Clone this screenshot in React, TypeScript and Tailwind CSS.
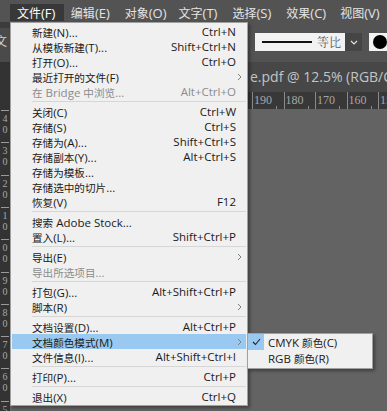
import React from "react";

type Item =
  | "sep"
  | { l: string; s?: string; d?: boolean; a?: boolean; h?: boolean };

const items: Item[] = [
  { l: "新建(N)...", s: "Ctrl+N" },
  { l: "从模板新建(T)...", s: "Shift+Ctrl+N" },
  { l: "打开(O)...", s: "Ctrl+O" },
  { l: "最近打开的文件(F)", a: true },
  { l: "在 Bridge 中浏览...", s: "Alt+Ctrl+O", d: true },
  "sep",
  { l: "关闭(C)", s: "Ctrl+W" },
  { l: "存储(S)", s: "Ctrl+S" },
  { l: "存储为(A)...", s: "Shift+Ctrl+S" },
  { l: "存储副本(Y)...", s: "Alt+Ctrl+S" },
  { l: "存储为模板..." },
  { l: "存储选中的切片..." },
  { l: "恢复(V)", s: "F12" },
  "sep",
  { l: "搜索 Adobe Stock..." },
  { l: "置入(L)...", s: "Shift+Ctrl+P" },
  "sep",
  { l: "导出(E)", a: true },
  { l: "导出所选项目...", d: true },
  "sep",
  { l: "打包(G)...", s: "Alt+Shift+Ctrl+P" },
  { l: "脚本(R)", a: true },
  "sep",
  { l: "文档设置(D)...", s: "Alt+Ctrl+P" },
  { l: "文档颜色模式(M)", a: true, h: true },
  { l: "文件信息(I)...", s: "Alt+Shift+Ctrl+I" },
  "sep",
  { l: "打印(P)...", s: "Ctrl+P" },
  "sep",
  { l: "退出(X)", s: "Ctrl+Q" },
];

const menus = ["文件(F)", "编辑(E)", "对象(O)", "文字(T)", "选择(S)", "效果(C)", "视图(V)"];

const rulerNums = ["190", "180", "170", "160", "150"];
const vDigits = ["4", "3", "2", "1", "0", "9", "8", "7", "6", "5"];

const CJK_RE = /([\u3000-\u9fff]+)/;

function Mixed({ s, cjk, lat }: { s: string; cjk: string; lat: string }) {
  const parts = s.split(CJK_RE);
  return (
    <>
      {parts.map((p, i) =>
        p === "" ? null : CJK_RE.test(p) ? (
          <span key={i} className={cjk} style={{ fontFamily: '"Noto Sans CJK SC", sans-serif' }}>
            {p}
          </span>
        ) : (
          <span key={i} className={lat} style={{ fontFamily: '"Open Sans", "Noto Sans", sans-serif' }}>
            {p}
          </span>
        )
      )}
    </>
  );
}

function Chevron() {
  return (
    <svg width="5" height="8" viewBox="0 0 5 8" className="absolute right-[4px] top-[4px]">
      <path d="M1 1 L4 4 L1 7" fill="none" stroke="#808080" strokeWidth="1" />
    </svg>
  );
}

export default function App() {
  return (
    <div
      className="relative w-[387px] h-[411px] overflow-hidden bg-[#636363] flex flex-col"
      style={{ fontFamily: '"Open Sans", "Noto Sans CJK SC", sans-serif' }}
    >
      {/* menu bar */}
      <div className="h-[22px] bg-[#535353] flex items-stretch pl-[10px] shrink-0">
        {menus.map((m, i) => (
          <div
            key={m}
            className={
              "w-[54.5px] pl-[7px] mt-[4px] mb-[1px] flex items-center whitespace-nowrap " +
              (i === 0 ? "bg-[#383838] text-white" : "text-[#e4e4e4]")
            }
          >
            <span className="leading-[16px]">
              <Mixed s={m} cjk="text-[12px] leading-[16px]" lat="text-[13px] leading-[16px]" />
            </span>
          </div>
        ))}
      </div>

      <div className="flex flex-1 min-h-0">
        {/* left strip */}
        <div className="w-[10px] shrink-0 flex flex-col">
          <div className="h-[6px] bg-[#3c3c3c]" />
          <div className="h-[34px] bg-[#4a4a4a] overflow-hidden relative">
            <span
              className="absolute left-[-5px] top-[6px] text-[12px] leading-[14px] text-[#cfcfcf]"
              style={{ fontFamily: '"Noto Sans CJK SC", sans-serif' }}
            >
              文
            </span>
          </div>
          <div className="flex-1 bg-[#333333] relative overflow-hidden">
            {vDigits.map((d, i) => (
              <div
                key={i}
                className="absolute left-0 w-[10px] flex flex-col items-center"
                style={{ top: 48 + i * 32.3 }}
              >
                <div className="w-[8px] h-px bg-[#9a9a9a]" />
                <span
                  className="text-[10px] leading-[11px] text-[#a8a8a8] mt-[2px]"
                  style={{ fontFamily: '"Liberation Serif", serif' }}
                >
                  {d}
                </span>
                {i < 9 && (
                  <span
                    className="text-[10px] leading-[11px] text-[#a8a8a8]"
                    style={{ fontFamily: '"Liberation Serif", serif' }}
                  >
                    0
                  </span>
                )}
              </div>
            ))}
          </div>
        </div>

        {/* main */}
        <div className="flex-1 flex flex-col min-w-0">
          {/* control bar */}
          <div className="h-[40px] bg-[#535353] flex items-center justify-end shrink-0">
            <div className="w-[90px] h-[18px] bg-[#f2f2f2] flex items-center pl-[7px]">
              <div className="w-[50px] h-[2px] bg-[#111]" />
              <span
                className="ml-[5px] text-[12px] leading-[14px] text-[#555]"
                style={{ fontFamily: '"Noto Serif CJK SC", "Liberation Serif", serif' }}
              >
                等比
              </span>
            </div>
            <div className="w-[17px] h-[18px] bg-[#454545] flex items-center justify-center">
              <svg width="8" height="5" viewBox="0 0 8 5">
                <path d="M1 1 L4 4 L7 1" fill="none" stroke="#e0e0e0" strokeWidth="1.2" />
              </svg>
            </div>
            <div className="ml-[7px] w-[18px] h-[18px] bg-[#f2f2f2] flex items-center pl-[4px] overflow-hidden">
              <div className="w-[14px] h-[14px] rounded-full bg-black shrink-0" />
            </div>
          </div>
          {/* tab row */}
          <div className="h-[30px] bg-[#474747] flex items-center pl-[240px] shrink-0 overflow-hidden">
            <span className="text-[14px] leading-[18px] text-[#c4c4c4] whitespace-nowrap">
              e.pdf @ 12.5% (RGB/CMYK)
            </span>
          </div>
          {/* horizontal ruler */}
          <div className="h-[17px] bg-[#383838] shrink-0 flex pl-[242px] overflow-hidden">
            {rulerNums.map((n) => (
              <div key={n} className="w-[31.5px] shrink-0 flex h-full relative">
                <div className="w-px h-full bg-[#8a8a8a]" />
                <span
                  className="ml-[1px] text-[12px] leading-[17px] text-[#a6a6a6]"
                  style={{ fontFamily: '"Liberation Serif", serif' }}
                >
                  {n}
                </span>
                <div className="absolute left-[24px] bottom-0 w-px h-[3px] bg-[#8a8a8a]" />
              </div>
            ))}
          </div>
          <div className="flex-1 bg-[#636363]" />
        </div>
      </div>

      {/* File menu */}
      <div className="absolute left-[10px] top-[22px] w-[238px] border border-[#a0a0a0] bg-[#f0f0f0] p-[1px] shadow-[2px_2px_3px_rgba(0,0,0,0.35)]">
        {items.map((it, i) =>
          it === "sep" ? (
            <div key={i} className="h-[5px] flex items-center pl-[20px]">
              <div className="h-px w-full bg-[#d6d6d6]" />
            </div>
          ) : (
            <div
              key={i}
              className={
                "relative h-[15px] flex items-center justify-between pl-[20px] pr-[10px] whitespace-nowrap " +
                (it.h ? "bg-[#99c9f0] " : "") +
                (it.d ? "text-[#8c8c8c]" : "text-[#1a1a1a]")
              }
            >
              <span className="leading-[15px]">
                <Mixed s={it.l} cjk="text-[10.6px] leading-[15px]" lat="text-[11.5px] leading-[15px]" />
              </span>
              {it.s && (
                <span className="text-[11.5px] leading-[15px]" style={{ fontFamily: '"Open Sans", sans-serif' }}>
                  {it.s}
                </span>
              )}
              {it.a && <Chevron />}
            </div>
          )
        )}
      </div>

      {/* submenu */}
      <div className="absolute left-[247px] top-[333px] w-[126px] border border-[#a0a0a0] bg-[#f0f0f0] pb-[2px] shadow-[2px_2px_3px_rgba(0,0,0,0.35)] text-[#1a1a1a]">
        <div className="h-[16px] flex items-center">
          <div className="w-[16px] h-[16px] bg-[#99c9f0] flex items-center justify-center">
            <svg width="9" height="8" viewBox="0 0 9 8">
              <path d="M1 4 L3.5 6.5 L8 1" fill="none" stroke="#222" strokeWidth="1.1" />
            </svg>
          </div>
          <span className="ml-[4px] leading-[16px] whitespace-nowrap">
            <Mixed s="CMYK 颜色(C)" cjk="text-[10.6px] leading-[16px]" lat="text-[11.5px] leading-[16px]" />
          </span>
        </div>
        <div className="h-[16px] flex items-center pl-[20px] whitespace-nowrap">
          <span className="leading-[16px]">
            <Mixed s="RGB 颜色(R)" cjk="text-[10.6px] leading-[16px]" lat="text-[11.5px] leading-[16px]" />
          </span>
        </div>
      </div>
    </div>
  );
}
